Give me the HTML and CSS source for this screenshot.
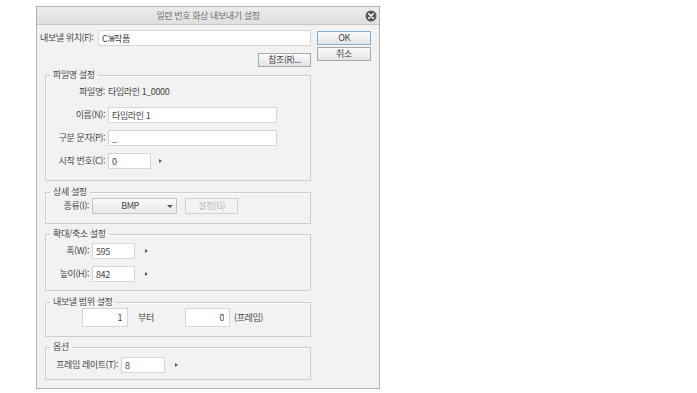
FILE: index.html
```html
<!DOCTYPE html>
<html lang="ko">
  <head>
    <meta charset="UTF-8" />
    <meta name="viewport" content="width=device-width, initial-scale=1.0" />
    <title>일련 번호 화상 내보내기 설정</title>
    <link rel="stylesheet" href="styles.css">
  </head>
  <body>
    <div class="page">
      <div class="dialog">
        <!-- Title bar -->
        <div class="titlebar">
          <span></span>
          <span class="title">일련 번호 화상 내보내기 설정</span>
          <svg class="close" width="12" height="12" viewBox="0 0 12 12">
            <circle cx="6" cy="6" r="5.5" fill="#595959" />
            <path d="M3.8 3.8 L8.2 8.2 M8.2 3.8 L3.8 8.2" stroke="#fff" stroke-width="1.6" stroke-linecap="round" />
          </svg>
        </div>

        <div class="content">
          <div class="main">
            <div class="dest-row">
              <label class="dest-label" for="dest">내보낼 위치(F):</label>
              <input class="field grow" type="text" id="dest" value="C:₩작품" />
            </div>
            <div class="browse-row">
              <button class="btn browse" type="button">참조(R)...</button>
            </div>

            <!-- 파일명 설정 -->
            <fieldset class="group group-name">
              <legend>파일명 설정</legend>
              <div class="grid name-grid">
                <span class="lbl">파일명:</span>
                <span class="value">타임라인 1_0000</span>

                <label class="lbl" for="name">이름(N):</label>
                <input class="field wide" type="text" id="name" value="타임라인 1" />

                <label class="lbl" for="sep">구분 문자(P):</label>
                <input class="field wide" type="text" id="sep" value="_" />

                <label class="lbl" for="start">시작 번호(C):</label>
                <div class="with-arrow">
                  <input class="field small" type="text" id="start" value="0" />
                  <span class="arrow"></span>
                </div>
              </div>
            </fieldset>

            <!-- 상세 설정 -->
            <fieldset class="group group-detail">
              <legend>상세 설정</legend>
              <div class="grid detail-grid">
                <span class="lbl">종류(I):</span>
                <div class="detail-row">
                  <div class="dropdown">
                    <span class="dropdown-text">BMP</span>
                    <span class="caret"></span>
                  </div>
                  <button class="btn disabled" type="button">설정(G)</button>
                </div>
              </div>
            </fieldset>

            <!-- 확대/축소 설정 -->
            <fieldset class="group group-scale">
              <legend>확대/축소 설정</legend>
              <div class="grid scale-grid">
                <label class="lbl" for="width">폭(W):</label>
                <div class="with-arrow">
                  <input class="field small" type="text" id="width" value="595" />
                  <span class="arrow wide-gap"></span>
                </div>

                <label class="lbl" for="height">높이(H):</label>
                <div class="with-arrow">
                  <input class="field small" type="text" id="height" value="842" />
                  <span class="arrow wide-gap"></span>
                </div>
              </div>
            </fieldset>

            <!-- 내보낼 범위 설정 -->
            <fieldset class="group group-range">
              <legend>내보낼 범위 설정</legend>
              <div class="range-row">
                <input class="field range from" type="text" value="1" />
                <span class="range-word">부터</span>
                <input class="field range to" type="text" value="0" />
                <span class="range-unit">(프레임)</span>
              </div>
            </fieldset>

            <!-- 옵션 -->
            <fieldset class="group group-option">
              <legend>옵션</legend>
              <div class="grid option-grid">
                <label class="lbl" for="rate">프레임 레이트(T):</label>
                <div class="with-arrow">
                  <input class="field small" type="text" id="rate" value="8" />
                  <span class="arrow wide-gap"></span>
                </div>
              </div>
            </fieldset>
          </div>

          <div class="side">
            <button class="btn side-btn ok" type="button">OK</button>
            <button class="btn side-btn" type="button">취소</button>
          </div>
        </div>
      </div>
    </div>
  </body>
</html>
```

FILE: styles.css
```css
body {
  margin: 0;
  background: #fff;
  font-family: "Noto Sans CJK KR", "Noto Sans", sans-serif;
  font-size: 9px;
  line-height: 12px;
  letter-spacing: -0.4px;
  color: #484848;
}

.page {
  padding: 6px 0 0 36px;
}

.dialog {
  width: 344px;
  height: 383px;
  box-sizing: border-box;
  border: 1px solid #b3b3b3;
  background: #f2f2f2;
}

.titlebar {
  height: 17px;
  display: grid;
  grid-template-columns: 1fr auto 1fr;
  align-items: center;
  background: linear-gradient(#ececec, #dfdfdf);
  border-bottom: 1px solid #c6c6c6;
}

.title {
  color: #707070;
}

.close {
  justify-self: end;
  margin-right: 2px;
}

.content {
  display: flex;
  gap: 6px;
  padding: 5px 7px 0 3px;
}

.main {
  width: 271px;
}

.side {
  display: flex;
  flex-direction: column;
  gap: 2px;
  margin-top: 1px;
}

/* fields and buttons */
.field {
  box-sizing: border-box;
  height: 16px;
  margin: 0;
  padding: 0 3px;
  border: 1px solid #d6d6d6;
  background: #fff;
  font: inherit;
  letter-spacing: inherit;
  color: #444;
  outline: none;
}

.btn {
  box-sizing: border-box;
  height: 14px;
  margin: 0;
  padding: 0;
  border: 1px solid #a9a9a9;
  background: linear-gradient(#fafafa, #e4e4e4);
  font: inherit;
  letter-spacing: inherit;
  color: #444;
}

.side-btn {
  width: 54px;
}

.ok {
  border-color: #7fb1da;
}

.dest-row {
  display: flex;
  align-items: center;
}

.dest-label {
  width: 58px;
}

.grow {
  flex: 1;
}

.browse-row {
  display: flex;
  justify-content: flex-end;
  margin-top: 7px;
}

.browse {
  width: 53px;
}

/* group boxes */
.group {
  margin: 0 0 0 5px;
  padding: 0;
  min-width: 0;
  border: 1px solid #cdcdcd;
  box-shadow: inset 1px 1px 0 #fbfbfb;
}

.group legend {
  margin-left: 4px;
  padding: 0 3px;
  line-height: 12px;
}

.group-name {
  margin-top: 2px;
}

.group-detail,
.group-range {
  margin-top: 5px;
}

.group-scale,
.group-option {
  margin-top: 4px;
}

.grid {
  display: grid;
  column-gap: 3px;
  row-gap: 7px;
  grid-auto-rows: 16px;
  align-items: center;
}

.lbl {
  text-align: right;
  white-space: nowrap;
}

.name-grid {
  grid-template-columns: 59px auto;
  padding: 3px 0 11px;
}

.wide {
  width: 169px;
}

.small {
  width: 43px;
}

.with-arrow {
  display: flex;
  align-items: center;
}

.arrow {
  width: 0;
  height: 0;
  margin-left: 8px;
  border-left: 3px solid #5c5c5c;
  border-top: 2.5px solid transparent;
  border-bottom: 2.5px solid transparent;
}

.arrow.wide-gap {
  margin-left: 10px;
}

.detail-grid {
  grid-template-columns: 43px auto;
  padding: 0 0 9px;
}

.detail-row {
  display: flex;
  gap: 8px;
}

.dropdown {
  box-sizing: border-box;
  width: 85px;
  height: 16px;
  display: flex;
  align-items: center;
  padding-right: 3px;
  border: 1px solid #c4c4c4;
  background: linear-gradient(#fbfbfb, #e8e8e8);
}

.dropdown-text {
  flex: 1;
  text-align: center;
}

.caret {
  width: 0;
  height: 0;
  border-top: 3px solid #555;
  border-left: 3px solid transparent;
  border-right: 3px solid transparent;
}

.btn.disabled {
  width: 53px;
  height: 16px;
  border-color: #d2d2d2;
  background: #f3f3f3;
  color: #b8b8b8;
}

.scale-grid {
  grid-template-columns: 43px auto;
  padding: 3px 0 8px;
}

.range-row {
  display: flex;
  align-items: center;
  padding: 0 0 9px 36px;
}

.field.range {
  height: 19px;
  text-align: right;
  padding-right: 5px;
}

.from {
  width: 46px;
}

.to {
  width: 45px;
}

.range-word {
  width: 47px;
  margin-left: 10px;
}

.range-unit {
  margin-left: 4px;
}

.option-grid {
  grid-template-columns: 72px auto;
  padding: 4px 0 6px;
}

.option-grid .small {
  width: 44px;
}
```
